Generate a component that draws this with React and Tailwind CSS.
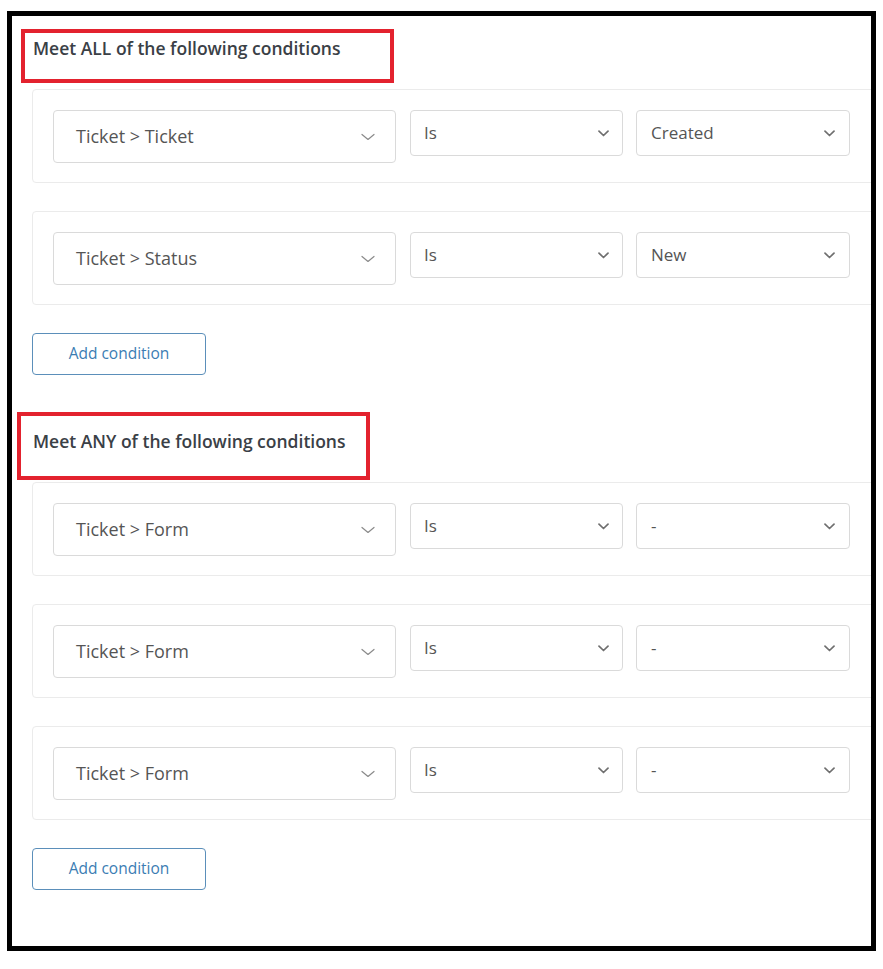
import React from "react";

const font = { fontFamily: '"Open Sans", "Noto Sans", Arial, sans-serif' };

function BigChevron() {
  return (
    <svg width="14" height="8" viewBox="0 0 14 8" fill="none" className="shrink-0">
      <path d="M1 1.5 L7 6.5 L13 1.5" stroke="#8a8a8a" strokeWidth="1.2" strokeLinecap="round" strokeLinejoin="round" />
    </svg>
  );
}

function SmallChevron() {
  return (
    <svg width="11" height="7" viewBox="0 0 11 7" fill="none" className="shrink-0">
      <path d="M1 1.2 L5.5 5.5 L10 1.2" stroke="#6f6f6f" strokeWidth="1.7" strokeLinecap="round" strokeLinejoin="round" />
    </svg>
  );
}

function ConditionCard({ field, op, value }) {
  return (
    <div className="mr-[-40px] flex items-start rounded-[4px] border border-[#ebebeb] bg-white pt-[20px] pb-[19px] pl-[20px]">
      <div className="flex h-[53px] w-[343px] items-center justify-between rounded-[4px] border border-[#dadada] pl-[22px] pr-[20px]">
        <span className="text-[18px] text-[#555555]">{field}</span>
        <BigChevron />
      </div>
      <div className="ml-[14px] flex h-[46px] w-[213px] items-center justify-between rounded-[4px] border border-[#dadada] pl-[13px] pr-[13px]">
        <span className="text-[17px] text-[#555555]">{op}</span>
        <SmallChevron />
      </div>
      <div className="ml-[13px] flex h-[46px] w-[214px] items-center justify-between rounded-[4px] border border-[#dadada] pl-[14px] pr-[14px]">
        <span className="text-[17px] text-[#555555]">{value}</span>
        <SmallChevron />
      </div>
    </div>
  );
}

function AddButton() {
  return (
    <button className="flex h-[42px] w-[174px] items-center justify-center rounded-[4px] border border-[#5b8fba] bg-white text-[15.5px] text-[#3b7db3]">
      Add condition
    </button>
  );
}

export default function App() {
  return (
    <div className="h-[969px] w-[883px] bg-white" style={font}>
      <div className="ml-[7px] mt-[11px] h-[940px] w-[869px] border-[5px] border-black">
        <div className="relative h-full w-full overflow-hidden pl-[20px] pt-[20px]">
          {/* annotation boxes */}
          <div className="pointer-events-none absolute left-[9px] top-[13px] h-[54px] w-[373px] border-[4px] border-[#e3222e]" />
          <div className="pointer-events-none absolute left-[5px] top-[396px] h-[68px] w-[353px] border-[4px] border-[#e3222e]" />

          <div className="pl-[1px] text-[17.5px] font-semibold leading-[24px] text-[#3a4046]">
            Meet ALL of the following conditions
          </div>
          <div className="mt-[29px] flex flex-col gap-[28px]">
            <ConditionCard field="Ticket > Ticket" op="Is" value="Created" />
            <ConditionCard field="Ticket > Status" op="Is" value="New" />
          </div>
          <div className="mt-[28px]">
            <AddButton />
          </div>

          <div className="mt-[54px] pl-[1px] text-[17.5px] font-semibold leading-[24px] text-[#3a4046]">
            Meet ANY of the following conditions
          </div>
          <div className="mt-[29px] flex flex-col gap-[28px]">
            <ConditionCard field="Ticket > Form" op="Is" value="-" />
            <ConditionCard field="Ticket > Form" op="Is" value="-" />
            <ConditionCard field="Ticket > Form" op="Is" value="-" />
          </div>
          <div className="mt-[28px]">
            <AddButton />
          </div>
        </div>
      </div>
    </div>
  );
}
